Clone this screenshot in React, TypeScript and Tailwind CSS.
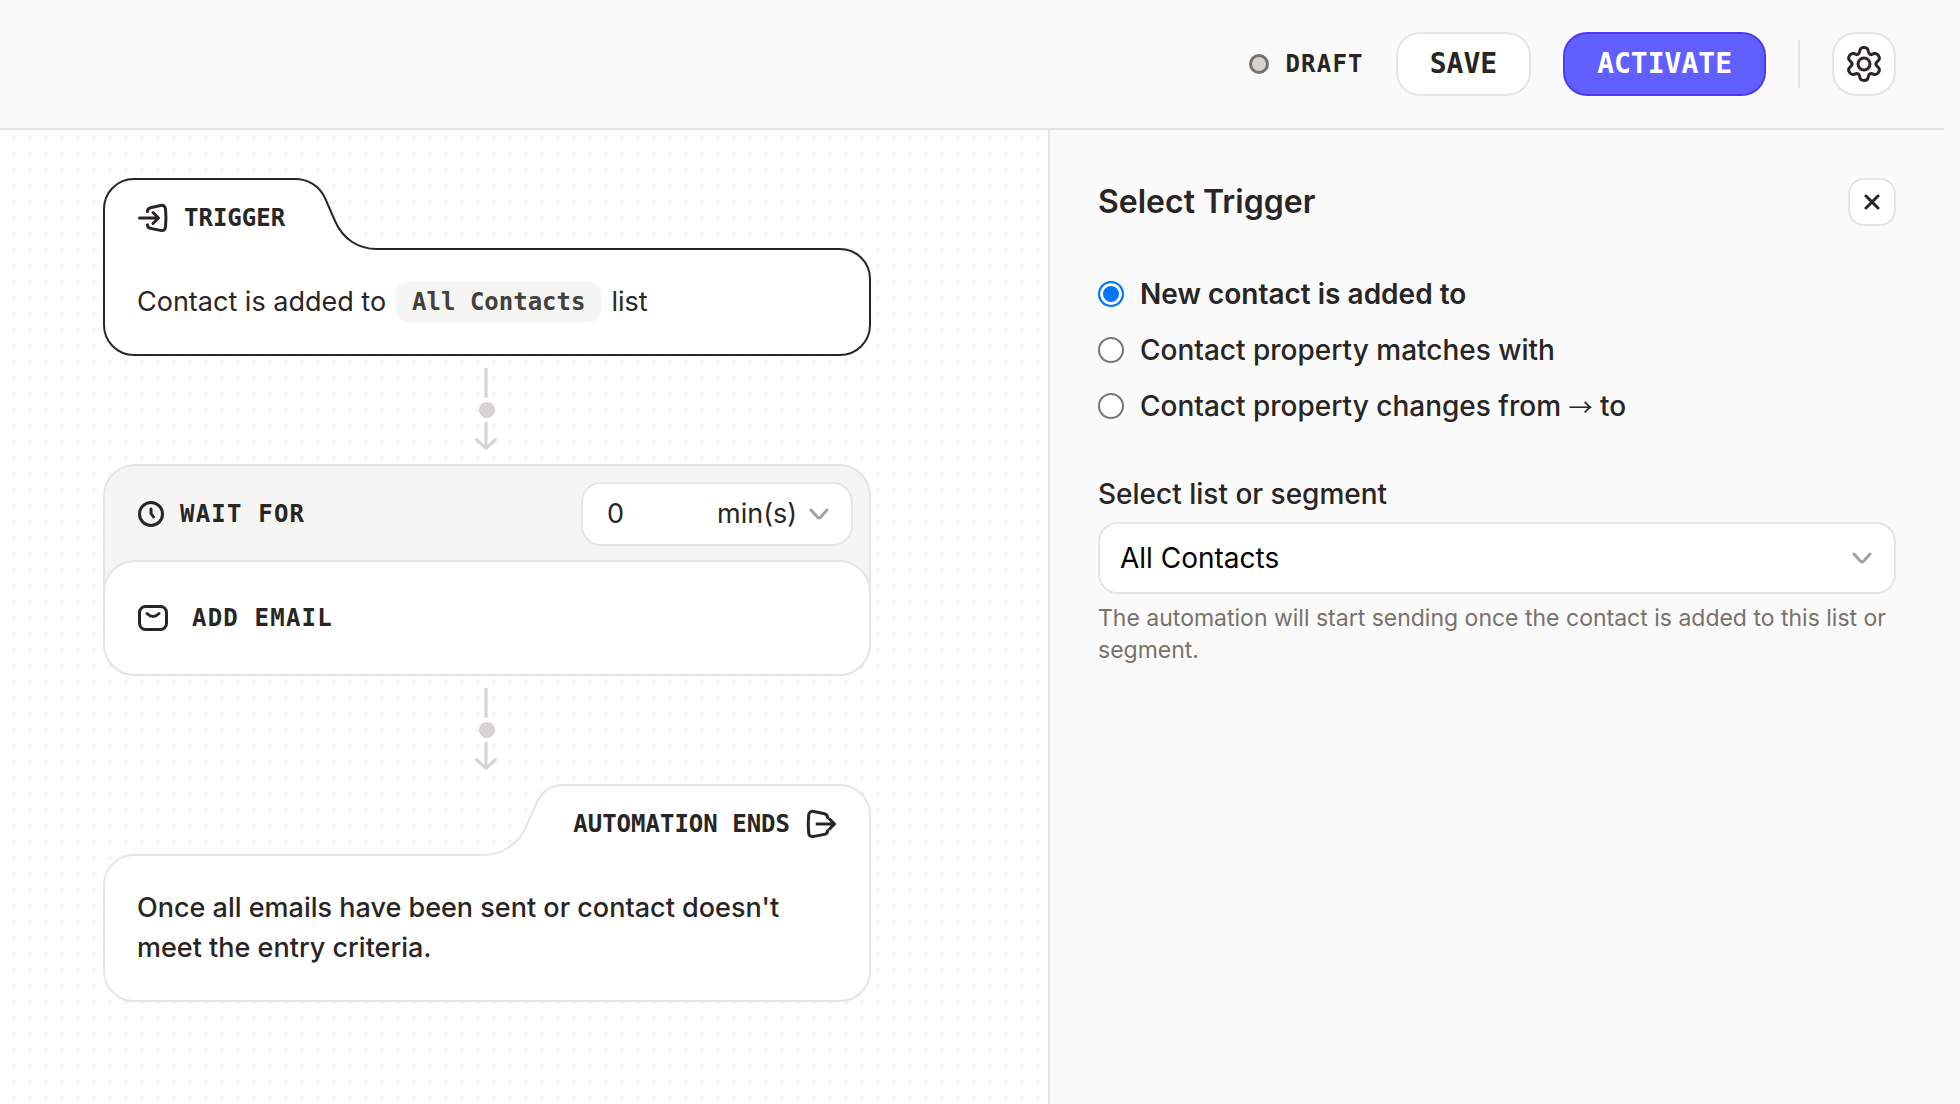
import React, { useState } from 'react';

const EnterIcon = () => (
  <svg className="w-[30px] h-[30px]" viewBox="0 0 30 30" fill="none" stroke="currentColor" strokeWidth="3" strokeLinecap="round" strokeLinejoin="round" aria-hidden="true">
    <path d="M9.500 8.500c0-2.200 1-3.200 3-3.700l10-2.300c3-.6 4.600.5 5 3.500.6 6 .6 12 0 18-.4 3-2 4-5 3.400l-10-2c-2-.4-3-1.400-3-3.600" />
    <path d="M1.500 15h18M15 9.500l5.500 5.500-5.500 5.500" />
  </svg>
);

const ExitIcon = () => (
  <svg className="w-[30px] h-[30px]" viewBox="0 0 30 30" fill="none" stroke="currentColor" strokeWidth="3" strokeLinecap="round" strokeLinejoin="round" aria-hidden="true">
    <path d="M21.500 8.500c0-2.200-1-3.200-3-3.700L8 2.500c-3-.6-5 .5-5.300 3.500-.6 6-.6 12 0 18 .3 3 2.300 4 5.300 3.400l10.500-2c2-.4 3-1.400 3-3.600" />
    <path d="M11 15h17.500M23.500 10l5 5-5 5" />
  </svg>
);

const ClockIcon = () => (
  <svg className="w-[26px] h-[26px]" viewBox="0 0 26 26" fill="none" stroke="currentColor" strokeWidth="3" strokeLinecap="round" strokeLinejoin="round" aria-hidden="true">
    <circle cx="13" cy="13" r="11.500" />
    <path d="M13 8v4.500l2.500 3.500" />
  </svg>
);

const MailIcon = () => (
  <svg className="w-[30px] h-[26px]" viewBox="0 0 30 26" fill="none" stroke="currentColor" strokeWidth="3" strokeLinecap="round" strokeLinejoin="round" aria-hidden="true">
    <rect x="1.500" y="1.500" width="27" height="23" rx="6" />
    <path d="M9 8.500c4 4 8 4 12 0" />
  </svg>
);

const ChevronIcon = () => (
  <svg className="w-5 h-3 text-[#a6a09b]" viewBox="0 0 20 12" fill="none" stroke="currentColor" strokeWidth="3" strokeLinecap="round" strokeLinejoin="round" aria-hidden="true">
    <path d="M2 2l6.500 7.200c.9.900 2.100.9 3 0L18 2" />
  </svg>
);

const CloseIcon = () => (
  <svg className="w-4 h-4" viewBox="0 0 16 16" fill="none" stroke="currentColor" strokeWidth="3" strokeLinecap="round" aria-hidden="true">
    <path d="M2 2l12 12M14 2L2 14" />
  </svg>
);

const GearIcon = () => (
  <svg className="w-9 h-9" viewBox="0 0 36 36" fill="none" stroke="currentColor" strokeWidth="3" strokeLinecap="round" strokeLinejoin="round" aria-hidden="true">
    <path d="M14 4c.8-3.200 7.200-3.200 8 0l.6 2.300c.5 1.700 1.800 2.500 3.400 2l2.600-.8c3-.8 6.200 4.400 4 6.800l-1.700 1.700c-1.200 1.200-1.200 2.800 0 4l1.700 1.700c2.200 2.400-1 7.600-4 6.800l-2.600-.8c-1.600-.5-2.900.3-3.400 2L22 32c-.8 3.200-7.200 3.200-8 0l-.6-2.300c-.5-1.700-1.800-2.500-3.400-2l-2.600.8c-3 .8-6.200-4.400-4-6.800L5.100 20c1.200-1.200 1.200-2.800 0-4l-1.700-1.700c-2.200-2.400 1-7.600 4-6.800l2.600.8c1.600.5 2.900-.3 3.400-2z" />
    <circle cx="18" cy="18" r="6" />
  </svg>
);

const Connector = () => (
  <div className="flex justify-center py-3 text-[#d6d3d1]">
    <svg className="w-6 h-[84px]" viewBox="0 0 24 84" fill="none" stroke="currentColor" strokeWidth="3" strokeLinejoin="round" aria-hidden="true">
      <path d="M11 0v30M11 54v26" />
      <path d="M1.500 71.500l9.500 9 9.500-9" strokeLinecap="round" />
      <circle cx="12" cy="42" r="8" fill="currentColor" stroke="none" />
    </svg>
  </div>
);

const triggers = [
  { id: 'added', label: 'New contact is added to' },
  { id: 'matches', label: 'Contact property matches with' },
  {
    id: 'changes',
    label: (
      <span>
        Contact property changes from <span className="font-['Noto_Sans_CJK_SC',sans-serif] font-normal text-2xl leading-none">→</span> to
      </span>
    )
  }
];

const Header = () => (
  <header className="flex items-center justify-end gap-8 h-[130px] px-12 border-b-2 border-[#e7e5e4] font-['DejaVu_Sans_Mono',monospace] font-bold">
    <div className="flex items-center gap-4 text-2xl tracking-wider">
      <span className="w-5 h-5 rounded-full border-3 border-[#79716b] bg-[#d6d3d1]"></span>
      DRAFT
    </div>
    <button className="h-16 px-8 rounded-3xl border-2 border-[#e7e5e4] bg-white text-[28px]">SAVE</button>
    <button className="h-16 px-8 rounded-3xl border-2 border-[#4f39f6] bg-[#615fff] text-white text-[28px]">ACTIVATE</button>
    <div className="w-[2px] h-12 bg-[#e7e5e4]"></div>
    <button aria-label="Settings" className="flex items-center justify-center w-16 h-16 rounded-3xl border-2 border-[#e7e5e4] bg-white">
      <GearIcon />
    </button>
  </header>
);

const TriggerCard = () => (
  <section className="relative px-[34px] pt-5 pb-[34px]">
    <svg className="absolute inset-0 w-full h-full" viewBox="0 0 768 178" fill="white" stroke="#292524" strokeWidth="2" aria-hidden="true">
      <path d="M1 31A30 30 0 0 1 31 1H192C204 1 216 7 222 20L232 43C240 61 255 71 274 71H737A30 30 0 0 1 767 101V147A30 30 0 0 1 737 177H31A30 30 0 0 1 1 147Z" />
    </svg>
    <div className="relative">
      <h2 className="flex items-center gap-4 h-10 px-px font-['DejaVu_Sans_Mono',monospace] font-bold text-2xl">
        <EnterIcon />
        TRIGGER
      </h2>
      <p className="flex items-center gap-[10px] mt-11 h-10 text-[27px]">
        Contact is added to
        <span className="flex items-center h-10 px-4 rounded-xl bg-[#f5f5f4] text-[#44403b] font-['DejaVu_Sans_Mono',monospace] font-bold text-2xl">All Contacts</span>
        list
      </p>
    </div>
  </section>
);

const EmailStep = () => (
  <section className="rounded-[32px] border-2 border-[#e7e5e4] bg-[#f5f5f4]">
    <div className="flex items-center justify-between h-[94px] pt-[2px] pl-[33px] pr-4">
      <label htmlFor="wait" className="flex items-center gap-4 font-['DejaVu_Sans_Mono',monospace] font-bold text-2xl tracking-wider">
        <ClockIcon />
        WAIT FOR
      </label>
      <div className="flex items-center h-16 pl-6 rounded-[20px] border-2 border-[#e7e5e4] bg-white text-[27px]">
        <input id="wait" type="text" inputMode="numeric" defaultValue="0" className="w-[110px] outline-none" />
        <div className="relative">
          <select aria-label="Wait unit" className="w-[134px] appearance-none outline-none bg-transparent">
            <option>min(s)</option>
            <option>hour(s)</option>
            <option>day(s)</option>
          </select>
          <div className="absolute right-[22px] inset-y-0 flex items-center pointer-events-none">
            <ChevronIcon />
          </div>
        </div>
      </div>
    </div>
    <button className="flex items-center gap-6 w-[768px] h-[116px] -mx-[2px] -mb-[2px] px-[33px] rounded-[32px] border-2 border-[#e7e5e4] bg-white font-['DejaVu_Sans_Mono',monospace] font-bold text-2xl tracking-wider">
      <MailIcon />
      ADD EMAIL
    </button>
  </section>
);

const EndCard = () => (
  <section className="relative px-[34px] pt-5 pb-[34px]">
    <svg className="absolute inset-0 w-full h-full" viewBox="0 0 768 218" fill="white" stroke="#e7e5e4" strokeWidth="2" aria-hidden="true">
      <path d="M767 31A30 30 0 0 0 737 1H460C448 1 439 7 433 20L423 43C415 61 398 71 379 71H31A30 30 0 0 0 1 101V187A30 30 0 0 0 31 217H737A30 30 0 0 0 767 187Z" />
    </svg>
    <div className="relative">
      <h2 className="flex items-center justify-end gap-4 h-10 px-px font-['DejaVu_Sans_Mono',monospace] font-bold text-2xl">
        AUTOMATION ENDS
        <ExitIcon />
      </h2>
      <p className="mt-11 text-[27px] leading-10 font-medium">
        Once all emails have been sent or contact doesn't meet the entry criteria.
      </p>
    </div>
  </section>
);

const TriggerPanel = () => {
  const [selected, setSelected] = useState('added');

  return (
    <aside className="w-[896px] shrink-0 p-12 border-l-2 border-[#e7e5e4]">
      <div className="flex items-center justify-between">
        <h1 className="text-[32px] font-semibold">Select Trigger</h1>
        <button aria-label="Close" className="flex items-center justify-center w-12 h-12 rounded-2xl border-2 border-[#e7e5e4] bg-white">
          <CloseIcon />
        </button>
      </div>

      <div className="mt-12 grid gap-4 text-[28px] leading-10">
        {triggers.map((trigger) => (
          <label key={trigger.id} className="flex items-center gap-4 h-10 font-medium has-checked:font-semibold">
            <input
              type="radio"
              name="trigger"
              checked={selected === trigger.id}
              onChange={() => setSelected(trigger.id)}
              className="appearance-none w-[26px] h-[26px] rounded-full border-2 border-[#767676] bg-white checked:border-[#0075ff] checked:bg-[#0075ff] checked:shadow-[inset_0_0_0_3px_white]"
            />
            {trigger.label}
          </label>
        ))}
      </div>

      <label htmlFor="list" className="block mt-12 text-[28px] leading-10 font-medium">Select list or segment</label>
      <div className="relative mt-2">
        <select id="list" className="w-full h-[72px] px-5 rounded-[20px] border-2 border-[#e7e5e4] bg-white text-black text-[28px] appearance-none">
          <option>All Contacts</option>
        </select>
        <div className="absolute right-6 inset-y-0 flex items-center pointer-events-none">
          <ChevronIcon />
        </div>
      </div>
      <p className="mt-2 text-[23px] leading-8 text-[#79716b]">
        The automation will start sending once the contact is added to this list or segment.
      </p>
    </aside>
  );
};

const App = () => {
  return (
    <div className="min-h-screen bg-[#fafafa] pr-4 flex flex-col font-['Inter',sans-serif] text-[#292524]">
      <Header />
      <div className="flex flex-1">
        <main className="flex-1 flex justify-center pt-12 pr-[74px] bg-white bg-[radial-gradient(circle,#f5f5f4_2px,transparent_3px)] bg-size-[16px_16px] bg-position-[6px_0px]">
          <div className="w-[768px]">
            <TriggerCard />
            <Connector />
            <EmailStep />
            <Connector />
            <EndCard />
          </div>
        </main>
        <TriggerPanel />
      </div>
    </div>
  );
};

export default App;
